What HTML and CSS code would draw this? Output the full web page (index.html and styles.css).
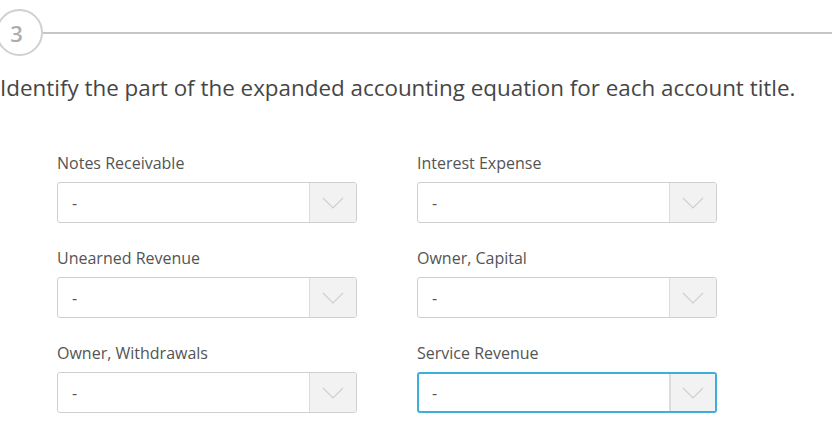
FILE: index.html
```html
<!DOCTYPE html>
<html>
<head>
<meta charset="utf-8">
<link rel="stylesheet" href="styles.css">
</head>
<body>
<div class="step">
  <div class="step-num">3</div>
  <div class="step-line"></div>
</div>
<h1 class="question">Identify the part of the expanded accounting equation for each account title.</h1>
<div class="grid">
  <div class="field">
    <label class="label">Notes Receivable</label>
    <div class="select"><span class="value">-</span><span class="arrow"><svg width="22" height="12" viewBox="0 0 22 12"><path d="M1 1 L11 11 L21 1" fill="none" stroke="#cfcfcf" stroke-width="1.2"/></svg></span></div>
  </div>
  <div class="field">
    <label class="label">Interest Expense</label>
    <div class="select"><span class="value">-</span><span class="arrow"><svg width="22" height="12" viewBox="0 0 22 12"><path d="M1 1 L11 11 L21 1" fill="none" stroke="#cfcfcf" stroke-width="1.2"/></svg></span></div>
  </div>
  <div class="field">
    <label class="label">Unearned Revenue</label>
    <div class="select"><span class="value">-</span><span class="arrow"><svg width="22" height="12" viewBox="0 0 22 12"><path d="M1 1 L11 11 L21 1" fill="none" stroke="#cfcfcf" stroke-width="1.2"/></svg></span></div>
  </div>
  <div class="field">
    <label class="label">Owner, Capital</label>
    <div class="select"><span class="value">-</span><span class="arrow"><svg width="22" height="12" viewBox="0 0 22 12"><path d="M1 1 L11 11 L21 1" fill="none" stroke="#cfcfcf" stroke-width="1.2"/></svg></span></div>
  </div>
  <div class="field">
    <label class="label">Owner, Withdrawals</label>
    <div class="select"><span class="value">-</span><span class="arrow"><svg width="22" height="12" viewBox="0 0 22 12"><path d="M1 1 L11 11 L21 1" fill="none" stroke="#cfcfcf" stroke-width="1.2"/></svg></span></div>
  </div>
  <div class="field">
    <label class="label">Service Revenue</label>
    <div class="select focused"><span class="value">-</span><span class="arrow"><svg width="22" height="12" viewBox="0 0 22 12"><path d="M1 1 L11 11 L21 1" fill="none" stroke="#cfcfcf" stroke-width="1.2"/></svg></span></div>
  </div>
</div>
</body>
</html>
```
FILE: styles.css
```css
html, body {
  margin: 0;
  padding: 0;
  background: #fff;
  font-family: "Open Sans", "Noto Sans", sans-serif;
  overflow: hidden;
}
body {
  padding-top: 9px;
}
.step {
  display: flex;
  align-items: center;
  margin-left: -4px;
}
.step-num {
  flex: none;
  height: 43px;
  width: 37px;
  padding-right: 6px;
  box-sizing: content-box;
  border: 2px solid #d0d0d0;
  border-radius: 50%;
  display: flex;
  align-items: center;
  justify-content: center;
  font-size: 22px;
  font-weight: 600;
  color: #adadad;
}
.step-line {
  flex: 1;
  height: 2px;
  background: #c6c6c6;
}
.question {
  margin: 17px 0 0 0;
  font-size: 22.4px;
  line-height: 30px;
  font-weight: 400;
  color: #464646;
  white-space: nowrap;
}
.grid {
  margin: 50px 0 0 57px;
  display: grid;
  grid-template-columns: 300px 300px;
  column-gap: 60px;
  row-gap: 25px;
}
.field {
  display: flex;
  flex-direction: column;
}
.label {
  font-size: 16px;
  line-height: 20px;
  color: #545454;
  margin-bottom: 9px;
}
.select {
  height: 41px;
  box-sizing: border-box;
  border: 1px solid #cfcfcf;
  border-radius: 3px;
  display: flex;
  align-items: stretch;
  overflow: hidden;
}
.select.focused {
  border: 2px solid #3bb0da;
}
.value {
  flex: 1;
  display: flex;
  align-items: center;
  padding-left: 14px;
  font-size: 16px;
  color: #555;
}
.focused .value {
  padding-left: 13px;
}
.arrow {
  flex: none;
  width: 46px;
  background: #f2f2f2;
  border-left: 1px solid #dcdcdc;
  display: flex;
  align-items: center;
  justify-content: center;
}
.focused .arrow {
  width: 44px;
  border-left-width: 2px;
}
```
